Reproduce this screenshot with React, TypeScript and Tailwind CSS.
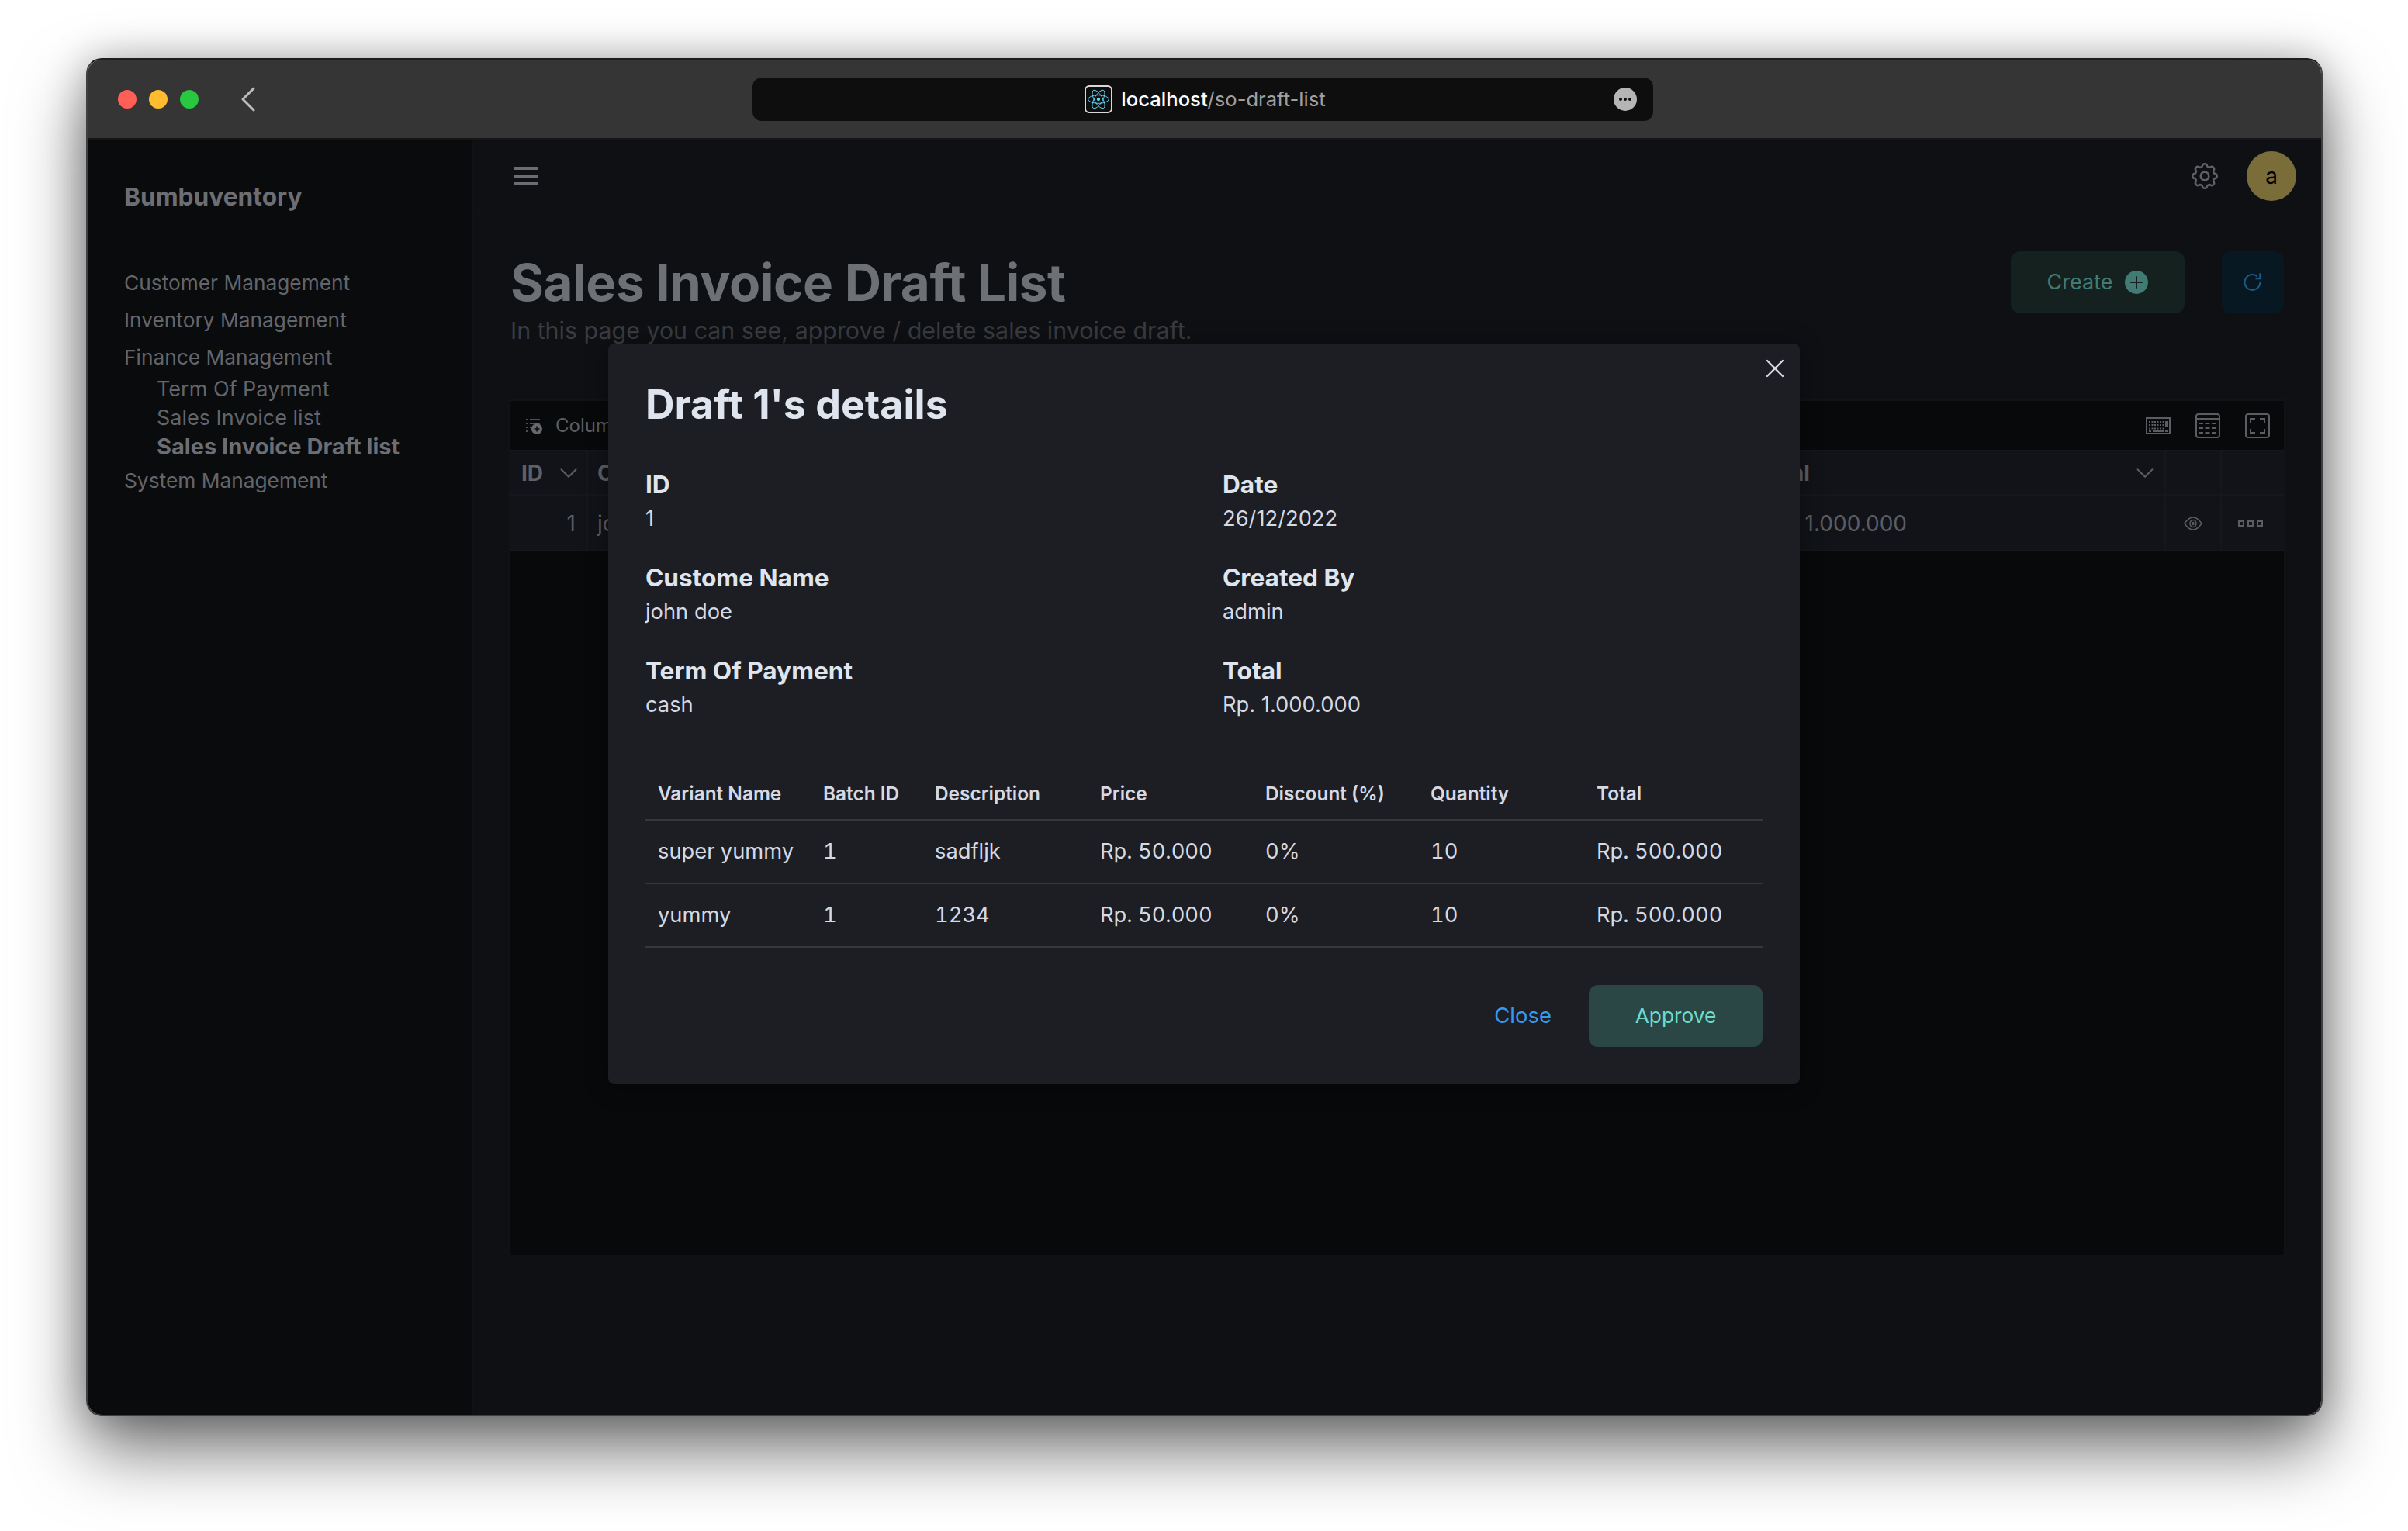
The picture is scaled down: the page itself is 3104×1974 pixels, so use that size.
import React from 'react';
import { ChevronDown, ChevronLeft, X, Plus } from 'lucide-react';
import { TbSettings } from 'react-icons/tb';

const navItems = [
  { label: 'Customer Management', sub: [] as string[] },
  { label: 'Inventory Management', sub: [] as string[] },
  { label: 'Finance Management', sub: ['Term Of Payment', 'Sales Invoice list', 'Sales Invoice Draft list'] },
  { label: 'System Management', sub: [] as string[] },
];

const details = [
  ['ID', '1', 'Date', '26/12/2022'],
  ['Custome Name', 'john doe', 'Created By', 'admin'],
  ['Term Of Payment', 'cash', 'Total', 'Rp. 1.000.000'],
];

const columns = ['Variant Name', 'Batch ID', 'Description', 'Price', 'Discount (%)', 'Quantity', 'Total'];
const rows = [
  ['super yummy', '1', 'sadfljk', 'Rp. 50.000', '0%', '10', 'Rp. 500.000'],
  ['yummy', '1', '1234', 'Rp. 50.000', '0%', '10', 'Rp. 500.000'],
];
const colWidths = ['w-[213px]', 'w-[144px]', 'w-[213px]', 'w-[213px]', 'w-[213px]', 'w-[214px]', 'w-[230px]'];

const ReactLogo = () => (
  <svg viewBox="0 0 36 36" className="w-9 h-9 rounded-md border-2 border-[#d8d8d8] bg-[#0e0e0e]" fill="none" stroke="#61dafb" strokeWidth="1">
    <circle cx="18" cy="18" r="2.4" fill="#61dafb" stroke="none" />
    <ellipse cx="18" cy="18" rx="15" ry="6" />
    <ellipse cx="18" cy="18" rx="15" ry="6" transform="rotate(60 18 18)" />
    <ellipse cx="18" cy="18" rx="15" ry="6" transform="rotate(120 18 18)" />
  </svg>
);

const HamburgerIcon = () => (
  <svg viewBox="0 0 32 24" className="w-8 h-6" fill="#6b6d72">
    <rect x="0" y="0" width="32" height="4" />
    <rect x="0" y="10" width="32" height="4" />
    <rect x="0" y="20" width="32" height="4" />
  </svg>
);

const ColumnsIcon = () => (
  <svg viewBox="0 0 24 24" className="w-6 h-6" fill="none" stroke="#66686d" strokeWidth="1.5">
    <path d="M2 4h2M7 4h13M2 9h2M7 9h13M2 14h2M7 14h5M2 19h2" />
    <circle cx="16" cy="16" r="7" fill="#66686d" stroke="none" />
    <path d="M16 12.5v7M12.5 16h7" stroke="#08090b" />
  </svg>
);

const KeyboardIcon = () => (
  <svg viewBox="0 0 32 22" className="w-8 h-[22px]" fill="none" stroke="#5b5d62" strokeWidth="2">
    <rect x="1" y="1" width="30" height="20" />
    <path d="M4 6h21M4 10h21M4 14.500h21" strokeDasharray="2 1.500" strokeWidth="2" />
    <rect x="25" y="5" width="3" height="7" fill="#5b5d62" stroke="none" />
    <path d="M9 18h14M4 18h3M25 18h3" />
  </svg>
);

const DensityIcon = () => (
  <svg viewBox="0 0 32 32" className="w-8 h-8" fill="none" stroke="#5b5d62" strokeWidth="2">
    <rect x="1" y="1" width="30" height="30" rx="3" />
    <path d="M1 7h30" />
    <path d="M4 13h24M4 19h24M4 25h24" strokeDasharray="6 2.500" />
  </svg>
);

const FullscreenIcon = () => (
  <svg viewBox="0 0 32 32" className="w-8 h-8" fill="none" stroke="#5b5d62" strokeWidth="2">
    <rect x="1" y="1" width="30" height="30" rx="3" />
    <path d="M7 12V7h6M19 7h6v5M25 20v5h-6M13 25H7v-5" />
  </svg>
);

const EyeIcon = () => (
  <svg viewBox="0 0 24 18" className="w-6 h-[18px]" fill="none" stroke="#5b5d62" strokeWidth="1.500">
    <path d="M1 9C5 3 9 1 12 1S19 3 23 9C19 15 15 17 12 17S5 15 1 9Z" />
    <ellipse cx="12" cy="9" rx="4" ry="4.500" />
    <ellipse cx="12" cy="9" rx="0.800" ry="1.500" />
  </svg>
);

const RefreshIcon = () => (
  <svg viewBox="0 0 24 24" className="w-7 h-7" fill="none" stroke="#1d5a85" strokeWidth="1.750">
    <path d="M20 12a8.500 8.500 0 1 1-3-6.500" />
    <path d="M20 2v6h-5" />
  </svg>
);

const Sidebar = () => (
  <aside className="w-[497px] shrink-0 bg-[#0a0b0d] border-r-2 border-[#111216] pl-[47px] pt-[52px]">
    <div className="text-[31.700px] leading-[44px] font-bold text-[#6c6e74]">Bumbuventory</div>
    <nav className="mt-[67px] flex flex-col">
      {navItems.map((item) => (
        <div key={item.label} className="mb-[4px]">
          <div className="text-[26.300px] leading-[44px] text-[#63656b]">{item.label}</div>
          {item.sub.map((s) => (
            <div key={s} className={`pl-[42px] leading-[37px] ${s.includes('Draft') ? 'text-[29px] font-bold text-[#6c6e74]' : 'text-[27px] text-[#63656b]'}`}>
              {s}
            </div>
          ))}
        </div>
      ))}
    </nav>
  </aside>
);

const MainBehind = () => (
  <main className="flex-1 min-w-0 bg-[#0e1014]">
    <div className="h-[96px] flex items-center justify-between pl-[52px] pr-[32px] border-b-2 border-[#101216]">
      <HamburgerIcon />
      <div className="flex items-center gap-[33px]">
        <TbSettings className="w-[42px] h-[42px] text-[#5f6166]" strokeWidth={1.5} />
        <div className="w-16 h-16 rounded-full bg-[#7a6d39] flex items-center justify-center text-[28px] text-black">a</div>
      </div>
    </div>
    <div className="pl-[48px] pr-[48px] pt-[46px]">
      <div className="flex justify-between h-[124px]">
        <div>
          <h1 className="text-[65.600px] leading-[84px] font-bold text-[#6d7075] tracking-[-0.5px]">Sales Invoice Draft List</h1>
          <p className="text-[30.400px] leading-[36px] mt-[2px] text-[#3a3c41]">In this page you can see, approve / delete sales invoice draft.</p>
        </div>
        <div className="flex gap-12 mt-[2px]">
          <div className="w-[224px] h-20 rounded-xl bg-[#15211f] flex items-center justify-center gap-4 text-[27px] text-[#427a74]">
            Create
            <span className="w-[30px] h-[30px] rounded-full bg-[#427a74] flex items-center justify-center">
              <Plus className="w-6 h-6 text-[#15211f]" strokeWidth={2} />
            </span>
          </div>
          <div className="w-20 h-20 rounded-xl bg-[#071823] flex items-center justify-center">
            <RefreshIcon />
          </div>
        </div>
      </div>
      <div className="-mx-[2px] mt-[69px] h-[1103px] bg-[#08090b] border-x-2 border-t-2 border-[#121317]">
        <div className="h-[63px] flex items-center justify-between pl-[18px] pr-[16px]">
          <div className="flex items-center gap-[16px] text-[24px] text-[#5c5e63]">
            <ColumnsIcon />
            Columns
          </div>
          <div className="flex items-center gap-[32px] pr-[2px]">
            <KeyboardIcon />
            <DensityIcon />
            <FullscreenIcon />
          </div>
        </div>
        <div className="h-[59px] flex bg-[#111318] border-y-2 border-[#16171c] text-[28px] font-bold text-[#606166]">
          <div className="w-[100px] flex items-center justify-between pl-[14px] pr-[4px] border-r-2 border-[#16171c]">
            ID
            <ChevronDown className="w-[38px] h-[38px] text-[#5b5d62]" strokeWidth={1.3} />
          </div>
          <div className="flex-1 flex items-center pl-[12px]">C</div>
          <div className="w-[535px] flex items-center justify-between pl-[8px] pr-[6px] border-r-2 border-[#16171c]">
            Total
            <ChevronDown className="w-[38px] h-[38px] text-[#5b5d62]" strokeWidth={1.3} />
          </div>
          <div className="w-[72px] border-r-2 border-[#16171c]" />
          <div className="w-[80px]" />
        </div>
        <div className="h-[72px] pt-[2px] flex bg-[#111318] border-b-2 border-[#16171c] text-[28px] text-[#5b5d62]">
          <div className="w-[100px] flex items-center justify-end pr-[14px] border-r-2 border-[#16171c]">1</div>
          <div className="flex-1 flex items-center pl-[12px]">jo</div>
          <div className="w-[535px] flex items-center justify-end pr-[332px] border-r-2 border-[#16171c]">Rp. 1.000.000</div>
          <div className="w-[72px] flex items-center justify-center border-r-2 border-[#16171c]">
            <EyeIcon />
          </div>
          <div className="w-[80px] pr-[6px] flex items-center justify-center gap-[4px]">
            <span className="w-[8px] h-[8px] border-2 border-[#5b5d62]" />
            <span className="w-[8px] h-[8px] border-2 border-[#5b5d62]" />
            <span className="w-[8px] h-[8px] border-2 border-[#5b5d62]" />
          </div>
        </div>
      </div>
    </div>
  </main>
);

const DraftModal = () => (
  <div className="absolute left-[671px] top-[366px] w-[1536px] h-[955px] rounded-lg bg-[#1d1e23] shadow-[0_2px_30px_rgba(0,0,0,0.4)] px-[48px] pt-[44px]">
    <X className="absolute right-[12px] top-[12px] w-10 h-10 text-[#d4d9e3]" strokeWidth={1.4} />
    <h2 className="text-[52px] leading-[70px] font-bold text-[#dfe5ef]">Draft 1's details</h2>
    <div className="mt-[46px] flex flex-col gap-[32px]">
      {details.map((row) => (
        <div key={row[0]} className="grid grid-cols-[744px_1fr]">
          <div>
            <div className="text-[31.600px] leading-[44px] font-bold text-[#dfe5ef]">{row[0]}</div>
            <div className="text-[27.300px] leading-[44px] text-[#d4d9e3]">{row[1]}</div>
          </div>
          <div>
            <div className="text-[31.600px] leading-[44px] font-bold text-[#dfe5ef]">{row[2]}</div>
            <div className="text-[27.300px] leading-[44px] text-[#d4d9e3]">{row[3]}</div>
          </div>
        </div>
      ))}
    </div>
    <table className="mt-[58px] w-[1440px] table-fixed border-collapse">
      <thead>
        <tr className="h-[68px] border-b-2 border-[#37383e]">
          {columns.map((c, i) => (
            <th key={c} className={`${colWidths[i]} pl-4 pt-[1px] text-left text-[24.400px] font-semibold text-[#d4d9e3]`}>{c}</th>
          ))}
        </tr>
      </thead>
      <tbody>
        {rows.map((r) => (
          <tr key={r[0]} className="h-[82px] border-b-2 border-[#37383e]">
            {r.map((v, i) => (
              <td key={i} className="pl-4 pt-[1px] text-[27.300px] tabular-nums text-[#d4d9e3]">{v}</td>
            ))}
          </tr>
        ))}
      </tbody>
    </table>
    <div className="mt-[48px] flex justify-end items-center gap-[48px]">
      <span className="text-[27.500px] text-[#339af0]">Close</span>
      <div className="w-[224px] h-20 rounded-xl bg-[#2a4645] flex items-center justify-center text-[26.300px] text-[#6ddccb]">Approve</div>
    </div>
  </div>
);

export default function App() {
  return (
    <div className="w-[3104px] h-[1974px] bg-white pt-[75px] pl-[111px] overflow-hidden" style={{ fontFamily: 'Inter, "Liberation Sans", sans-serif' }}>
      <div className="relative w-[2883px] h-[1751px] rounded-[20px] overflow-visible shadow-[0_44px_90px_rgba(0,0,0,0.55),0_0_50px_rgba(0,0,0,0.25)] border-2 border-[#3f3f41] border-t-[#1e1e1e]">
        <div className="h-full w-full flex flex-col overflow-hidden rounded-[18px]">
          <header className="h-[103px] shrink-0 bg-[#353535] border-b-2 border-[#161616] flex items-center relative">
            <div className="flex items-center gap-4 pl-[39px]">
              <span className="w-6 h-6 rounded-full bg-[#ff5f57]" />
              <span className="w-6 h-6 rounded-full bg-[#febc2e]" />
              <span className="w-6 h-6 rounded-full bg-[#28c840]" />
            </div>
            <ChevronLeft className="ml-[36px] w-14 h-14 text-[#bdbdbd]" strokeWidth={1.3} />
            <div className="absolute left-[857px] top-[23px] w-[1161px] h-[56px] rounded-xl bg-[#0e0e0e] flex items-center justify-center">
              <div className="flex items-center gap-[11px] text-[25.600px] pl-[6px]">
                <ReactLogo />
                <span className="text-white font-medium">localhost<span className="text-[#a0a0a0] font-normal">/so-draft-list</span></span>
              </div>
              <span className="absolute right-[21px] top-[13px] w-[30px] h-[30px] rounded-full bg-[#b5b5b5] flex items-center justify-center gap-[2px]">
                <span className="w-1 h-1 rounded-full bg-[#0e0e0e]" />
                <span className="w-1 h-1 rounded-full bg-[#0e0e0e]" />
                <span className="w-1 h-1 rounded-full bg-[#0e0e0e]" />
              </span>
            </div>
          </header>
          <div className="flex-1 flex min-h-0">
            <Sidebar />
            <MainBehind />
          </div>
        </div>
        <DraftModal />
      </div>
    </div>
  );
}
